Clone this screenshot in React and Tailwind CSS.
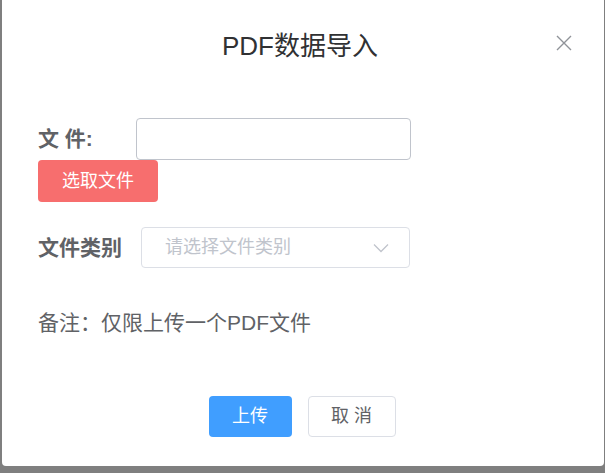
const FONT = { fontFamily: '"Liberation Sans", "Noto Sans CJK SC", sans-serif' };

function CloseIcon() {
  return (
    <svg width="16" height="16" viewBox="0 0 16 16" fill="none">
      <path d="M1 1L15 15M15 1L1 15" stroke="#909399" strokeWidth="1.4" />
    </svg>
  );
}

function ChevronDown() {
  return (
    <svg width="16" height="10" viewBox="0 0 16 10" fill="none">
      <path d="M1 1.5L8 8.5L15 1.5" stroke="#c0c4cc" strokeWidth="1.3" />
    </svg>
  );
}

export default function App() {
  return (
    <div className="w-[605px] h-[473px] bg-[#7f7f7f] pl-[2px] overflow-hidden" style={FONT}>
      <div className="relative w-[602px] h-[466px] bg-white rounded-b-[4px]">
        {/* header */}
        <div className="pt-[30px] pr-[6px] text-center text-[26px] leading-[32px] text-[#303133]">
          PDF数据导入
        </div>
        <button className="absolute top-[35px] left-[554px] p-0">
          <CloseIcon />
        </button>

        {/* form */}
        <div className="pl-[36px] mt-[56px]">
          <div className="flex items-center">
            <label className="w-[98px] text-[21px] font-bold text-[#606266]">文 件:</label>
            <div className="w-[275px] h-[42px] border border-[#c0c4cc] rounded-[4px]" />
          </div>
          <button className="w-[120px] h-[42px] bg-[#f76e6e] rounded-[4px] text-white text-[18px]">
            选取文件
          </button>

          <div className="flex items-center mt-[25px]">
            <label className="w-[103px] text-[21px] font-bold text-[#606266]">文件类别</label>
            <div className="w-[269px] h-[41px] border border-[#dcdfe6] rounded-[4px] flex items-center justify-between pl-[23px] pr-[20px]">
              <span className="text-[18px] text-[#c0c4cc]">请选择文件类别</span>
              <ChevronDown />
            </div>
          </div>

          <p className="mt-[43px] text-[21px] leading-[24px] text-[#606266]">备注：仅限上传一个PDF文件</p>
        </div>

        {/* footer */}
        <div className="flex justify-center gap-[16px] mt-[61px] pr-[2px]">
          <button className="w-[83px] h-[41px] bg-[#409eff] rounded-[4px] text-white text-[18px]">上传</button>
          <button className="w-[88px] h-[41px] border border-[#dcdfe6] rounded-[4px] text-[#606266] text-[18px]">
            取 消
          </button>
        </div>
      </div>
    </div>
  );
}
